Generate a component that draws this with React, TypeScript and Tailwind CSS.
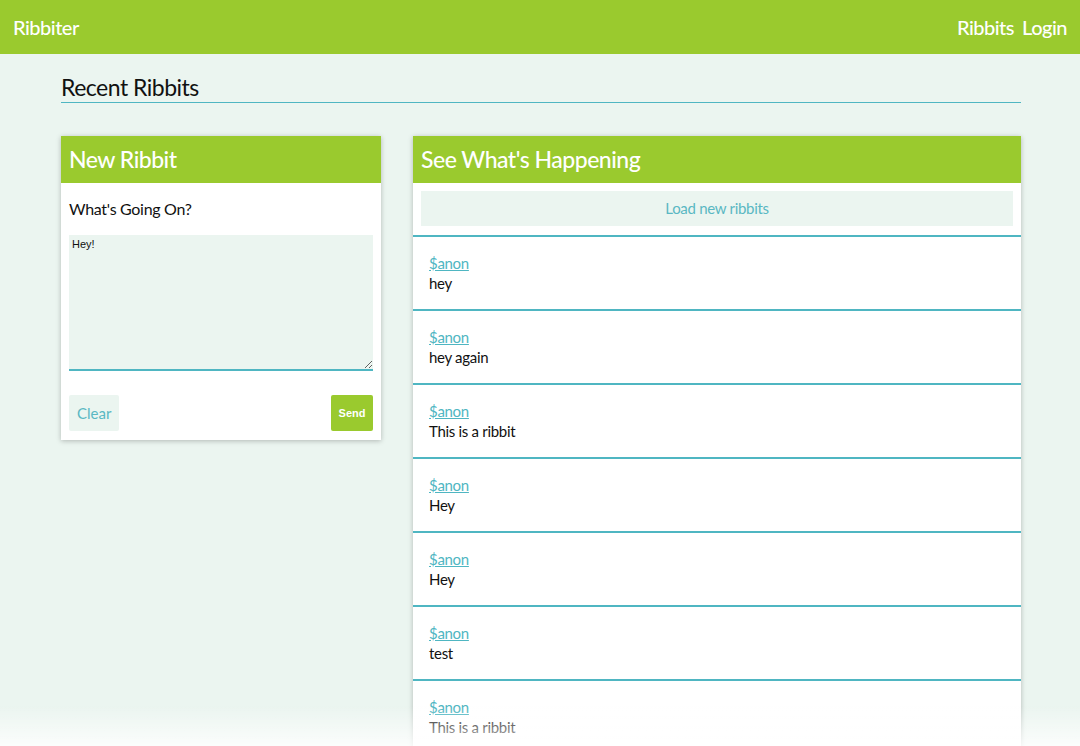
import React from "react";

const ribbits = [
  "hey",
  "hey again",
  "This is a ribbit",
  "Hey",
  "Hey",
  "test",
  "This is a ribbit",
];

const App: React.FC = () => {
  return (
    <main
      className="min-h-screen bg-[#ebf5f0] text-[#111]"
      style={{ fontFamily: "Lato, 'Noto Sans', sans-serif" }}
    >
      <nav className="h-[54px] bg-[#9aca2e] flex items-center justify-between px-[13px] pb-[1px] text-white">
        <span className="text-[20px] font-medium tracking-[-0.5px]">Ribbiter</span>
        <div className="flex gap-[8px] text-[20px] font-medium tracking-[-0.5px]">
          <span>Ribbits</span>
          <span>Login</span>
        </div>
      </nav>

      <div className="w-[960px] ml-[61px]">
        <h1 className="mt-[20px] text-[23px] leading-[27px] tracking-[-0.5px] pb-[1px] border-b border-[#4fb6c2]">
          Recent Ribbits
        </h1>

        <div className="mt-[33px] flex gap-[32px] items-start">
          <section className="w-[320px] bg-white shadow-[0_1px_5px_rgba(0,0,0,0.25)]">
            <header className="h-[47px] bg-[#9aca2e] flex items-center px-[8px]">
              <h2 className="text-white text-[23px] font-medium tracking-[-0.5px]">New Ribbit</h2>
            </header>
            <div className="px-[8px] pt-[16px] pb-[9px]">
              <p className="text-[16px] tracking-[-0.3px] leading-[20px]">What's Going On?</p>
              <textarea
                defaultValue="Hey!"
                className="mt-[16px] block w-full h-[136px] bg-[#ebf5f0] border-b-2 border-[#4fb6c2] px-[3px] py-[1px] text-[11px] outline-none resize-y"
                style={{ fontFamily: "'Liberation Sans', Arial, sans-serif" }}
              />
              <div className="mt-[24px] flex justify-between">
                <button className="h-[36px] px-[8px] bg-[#ebf5f0] text-[#5ab8c3] text-[15px] rounded-[2px]">
                  Clear
                </button>
                <button
                  className="h-[36px] w-[42px] bg-[#9aca2e] text-white text-[11px] font-bold rounded-[2px]"
                  style={{ fontFamily: "'Liberation Sans', Arial, sans-serif" }}
                >
                  Send
                </button>
              </div>
            </div>
          </section>

          <section className="flex-1 bg-white shadow-[0_1px_5px_rgba(0,0,0,0.25)]">
            <header className="h-[47px] bg-[#9aca2e] flex items-center px-[8px]">
              <h2 className="text-white text-[23px] font-medium tracking-[-0.5px]">See What's Happening</h2>
            </header>
            <div className="pt-[8px] px-[8px] pb-[9px]">
              <button className="w-full h-[35px] bg-[#ebf5f0] text-[#5ab8c3] text-[15px] tracking-[-0.3px]">
                Load new ribbits
              </button>
            </div>
            <ul>
              {ribbits.map((text, i) => (
                <li
                  key={i}
                  className="h-[74px] border-t-2 border-[#4fb6c2] px-[16px] pt-[16px] text-[15px] leading-[20px] tracking-[-0.3px]"
                >
                  <a href="#" className="text-[#4fb6c2] underline">
                    $anon
                  </a>
                  <p>{text}</p>
                </li>
              ))}
            </ul>
          </section>
        </div>
      </div>

      <div className="fixed bottom-0 left-0 right-0 h-[40px] bg-gradient-to-b from-transparent to-white/80 pointer-events-none" />
    </main>
  );
};

export default App;
